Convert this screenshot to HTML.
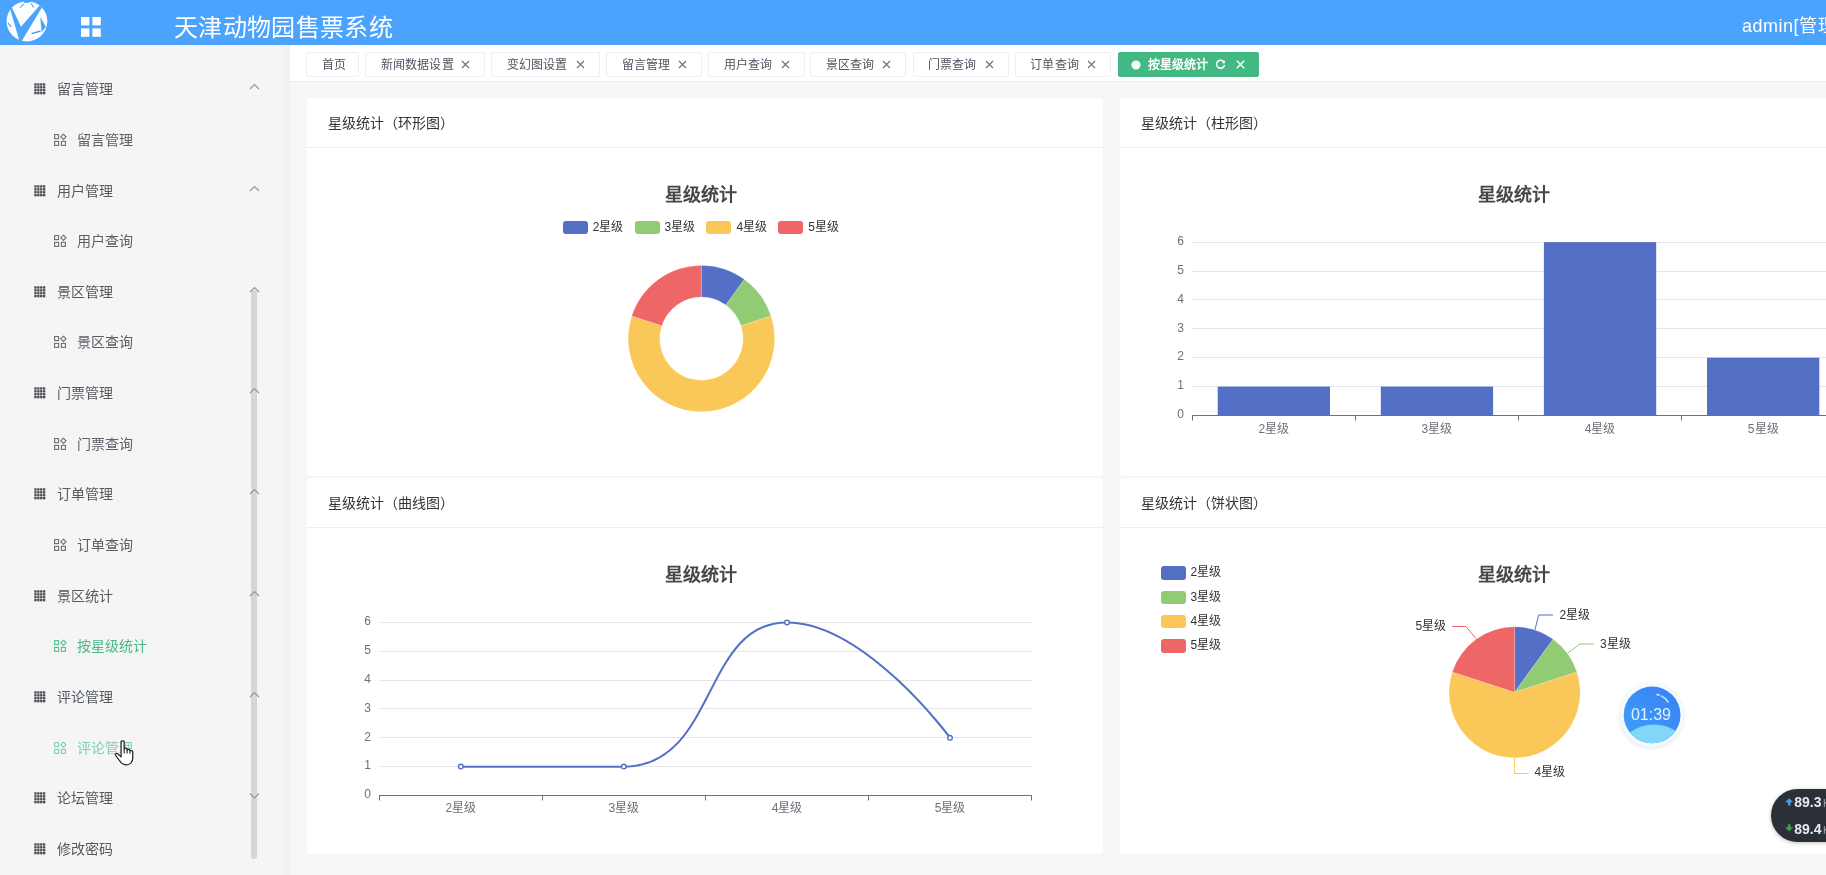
<!DOCTYPE html>
<html lang="zh-CN">
<head>
<meta charset="utf-8">
<title>天津动物园售票系统</title>
<style>
*{box-sizing:border-box;margin:0;padding:0}
html,body{width:1826px;height:875px;overflow:hidden;background:#f7f7f7;}
body{position:relative;font-family:"Liberation Sans",sans-serif;color:#303133;opacity:.999}
.abs{position:absolute}
#hdr{position:absolute;left:0;top:0;width:1826px;height:45px;background:#4ba3fd;}
#hdr .title{position:absolute;left:174px;top:10.5px;height:34px;line-height:34px;font-size:24px;color:#fff;white-space:nowrap;letter-spacing:0.35px}
#hdr .user{position:absolute;left:1742px;top:10px;height:32px;line-height:32px;font-size:18px;color:#fff;white-space:nowrap;letter-spacing:.5px}
#side{position:absolute;left:0;top:45px;width:290px;height:830px;background:#f5f5f5;}
#sideshadow{position:absolute;left:280px;top:45px;width:10px;height:830px;background:linear-gradient(to right,rgba(0,0,0,0),rgba(0,0,0,0.018));}
.mi{position:absolute;left:0;width:290px;height:30px;line-height:30px;font-size:14px;color:#555a61;white-space:nowrap}
.mi .t{position:absolute;left:57px;top:0}
.mi svg.g{position:absolute;left:34px;top:9px}
.si{position:absolute;left:0;width:290px;height:30px;line-height:30px;font-size:14px;color:#5b6067;white-space:nowrap}
.si .t{position:absolute;left:76.7px;top:0}
.si svg.g{position:absolute;left:54px;top:9px}
.chev{position:absolute;left:249px;width:11px;height:7px}
#thumb{position:absolute;left:251px;top:290px;width:6px;height:569px;border-radius:3px;background:#d2d2d2;opacity:.92}
#tabs{position:absolute;left:290px;top:45px;width:1536px;height:37px;background:#fff;border-bottom:1px solid #ededed;}
.tab{position:absolute;top:51.5px;height:25px;border:1px solid #efeff1;border-radius:2px;background:#fff;font-size:12px;line-height:24px;color:#4f5561;white-space:nowrap;letter-spacing:.15px}
.tab .t{position:absolute;left:14.5px;top:0}
.tab svg{position:absolute;top:7.5px}
.tab.on{background:#42b983;border-color:#42b983;color:#fff;font-weight:bold}
.card{position:absolute;background:#fff;border-radius:3px;box-shadow:0 0 2px rgba(0,0,0,0.045)}
.card .h{position:absolute;left:0;top:0;right:0;height:50.8px;border-bottom:1px solid #eeeeee;}
.card .h span{position:absolute;left:21.2px;top:10.8px;height:30px;line-height:30px;font-size:14px;color:#333;white-space:nowrap}
.ct{position:absolute;width:120px;height:26px;line-height:26px;text-align:center;font-size:18px;font-weight:bold;color:#464646;white-space:nowrap}
.lg{position:absolute;height:14px;}
.lg i{position:absolute;left:0;top:0;width:25px;height:13.4px;border-radius:3px}
.lg span{position:absolute;left:30px;top:-2.9px;height:18px;line-height:18px;font-size:12px;color:#333;white-space:nowrap}
.ax{position:absolute;font-size:12px;color:#6e7079;height:16px;line-height:16px;white-space:nowrap}
.pl{position:absolute;font-size:12px;color:#333;height:16px;line-height:16px;white-space:nowrap}
svg{display:block;overflow:visible}
#charts{position:absolute;left:0;top:0;width:1826px;height:875px;pointer-events:none}
</style>
</head>
<body>

<div id="hdr">
<svg class="abs" style="left:0;top:0" width="56" height="46" viewBox="0 0 56 46">
<ellipse cx="26.95" cy="21.3" rx="20.4" ry="20.1" fill="#fbfeff"/>
<path d="M10.2 9.3 L11.9 7.6 L21 26.8 L39.6 5.6 L41.9 7.6 L21.4 41.6 L19.6 41.6 Z" fill="#4ba3fd"/>
<path d="M20.2 7.7 L23.7 3.9 M31 3.2 L33.6 7.4" stroke="#6f9fe0" stroke-width="1.1" fill="none"/>
<path d="M23.8 0.5 L31 0.5 L30.2 2.6 L24.4 2.9 Z" fill="#4ba3fd"/>
<path d="M40.3 17.2 L45.9 26.8 L41.6 32.2 Z" fill="#4ba3fd"/>
<path d="M31.5 33.7 L40.5 31.1" stroke="#4c8fe0" stroke-width="1.3" fill="none"/>
<path d="M8.1 23.1 L11.3 26.8" stroke="#5a8fd8" stroke-width="1.1" fill="none"/>
</svg>
<svg class="abs" style="left:81px;top:17px" width="20" height="20" viewBox="0 0 20 20">
<rect x="0" y="0" width="8.4" height="8.4" fill="#fff"/><rect x="11.4" y="0" width="8.4" height="8.4" fill="#fff"/>
<rect x="0" y="11.4" width="8.4" height="8.4" fill="#fff"/><rect x="11.4" y="11.4" width="8.4" height="8.4" fill="#fff"/>
</svg>
<div class="title">天津动物园售票系统</div>
<div class="user">admin[管理员]</div>
</div>
<div id="side"></div><div id="sideshadow"></div>
<div id="thumb"></div>
<div class="mi" style="top:74.2px"><svg class="g" width="12" height="12" viewBox="0 0 12 12"><g fill="#45494f"><rect x="0.30" y="0.30" width="2.3" height="2.3"/><rect x="3.20" y="0.30" width="2.3" height="2.3"/><rect x="6.10" y="0.30" width="2.3" height="2.3"/><rect x="9.00" y="0.30" width="2.3" height="2.3"/><rect x="0.30" y="3.20" width="2.3" height="2.3"/><rect x="3.20" y="3.20" width="2.3" height="2.3"/><rect x="6.10" y="3.20" width="2.3" height="2.3"/><rect x="9.00" y="3.20" width="2.3" height="2.3"/><rect x="0.30" y="6.10" width="2.3" height="2.3"/><rect x="3.20" y="6.10" width="2.3" height="2.3"/><rect x="6.10" y="6.10" width="2.3" height="2.3"/><rect x="9.00" y="6.10" width="2.3" height="2.3"/><rect x="0.30" y="9.00" width="2.3" height="2.3"/><rect x="3.20" y="9.00" width="2.3" height="2.3"/><rect x="6.10" y="9.00" width="2.3" height="2.3"/><rect x="9.00" y="9.00" width="2.3" height="2.3"/></g></svg><span class="t">留言管理</span></div>
<svg class="chev" style="top:83.2px" viewBox="0 0 11 7"><path d="M1 6 L5.5 1.5 L10 6" fill="none" stroke="#92959b" stroke-width="1.1"/></svg>
<div class="si" style="top:124.8px;color:#5b6067"><svg class="g" width="12" height="12" viewBox="0 0 12 12" fill="none" stroke="#6a6e75" stroke-width="1.1">
<rect x="0.6" y="0.6" width="4" height="4"/><rect x="0.6" y="7.4" width="4" height="4"/><rect x="7.4" y="7.4" width="4" height="4"/>
<path d="M9.4 0.2 L12 2.8 L9.4 5.4 L6.8 2.8 Z"/></svg><span class="t">留言管理</span></div>
<div class="mi" style="top:175.5px"><svg class="g" width="12" height="12" viewBox="0 0 12 12"><g fill="#45494f"><rect x="0.30" y="0.30" width="2.3" height="2.3"/><rect x="3.20" y="0.30" width="2.3" height="2.3"/><rect x="6.10" y="0.30" width="2.3" height="2.3"/><rect x="9.00" y="0.30" width="2.3" height="2.3"/><rect x="0.30" y="3.20" width="2.3" height="2.3"/><rect x="3.20" y="3.20" width="2.3" height="2.3"/><rect x="6.10" y="3.20" width="2.3" height="2.3"/><rect x="9.00" y="3.20" width="2.3" height="2.3"/><rect x="0.30" y="6.10" width="2.3" height="2.3"/><rect x="3.20" y="6.10" width="2.3" height="2.3"/><rect x="6.10" y="6.10" width="2.3" height="2.3"/><rect x="9.00" y="6.10" width="2.3" height="2.3"/><rect x="0.30" y="9.00" width="2.3" height="2.3"/><rect x="3.20" y="9.00" width="2.3" height="2.3"/><rect x="6.10" y="9.00" width="2.3" height="2.3"/><rect x="9.00" y="9.00" width="2.3" height="2.3"/></g></svg><span class="t">用户管理</span></div>
<svg class="chev" style="top:184.5px" viewBox="0 0 11 7"><path d="M1 6 L5.5 1.5 L10 6" fill="none" stroke="#92959b" stroke-width="1.1"/></svg>
<div class="si" style="top:226.1px;color:#5b6067"><svg class="g" width="12" height="12" viewBox="0 0 12 12" fill="none" stroke="#6a6e75" stroke-width="1.1">
<rect x="0.6" y="0.6" width="4" height="4"/><rect x="0.6" y="7.4" width="4" height="4"/><rect x="7.4" y="7.4" width="4" height="4"/>
<path d="M9.4 0.2 L12 2.8 L9.4 5.4 L6.8 2.8 Z"/></svg><span class="t">用户查询</span></div>
<div class="mi" style="top:276.8px"><svg class="g" width="12" height="12" viewBox="0 0 12 12"><g fill="#45494f"><rect x="0.30" y="0.30" width="2.3" height="2.3"/><rect x="3.20" y="0.30" width="2.3" height="2.3"/><rect x="6.10" y="0.30" width="2.3" height="2.3"/><rect x="9.00" y="0.30" width="2.3" height="2.3"/><rect x="0.30" y="3.20" width="2.3" height="2.3"/><rect x="3.20" y="3.20" width="2.3" height="2.3"/><rect x="6.10" y="3.20" width="2.3" height="2.3"/><rect x="9.00" y="3.20" width="2.3" height="2.3"/><rect x="0.30" y="6.10" width="2.3" height="2.3"/><rect x="3.20" y="6.10" width="2.3" height="2.3"/><rect x="6.10" y="6.10" width="2.3" height="2.3"/><rect x="9.00" y="6.10" width="2.3" height="2.3"/><rect x="0.30" y="9.00" width="2.3" height="2.3"/><rect x="3.20" y="9.00" width="2.3" height="2.3"/><rect x="6.10" y="9.00" width="2.3" height="2.3"/><rect x="9.00" y="9.00" width="2.3" height="2.3"/></g></svg><span class="t">景区管理</span></div>
<svg class="chev" style="top:285.8px" viewBox="0 0 11 7"><path d="M1 6 L5.5 1.5 L10 6" fill="none" stroke="#92959b" stroke-width="1.1"/></svg>
<div class="si" style="top:327.4px;color:#5b6067"><svg class="g" width="12" height="12" viewBox="0 0 12 12" fill="none" stroke="#6a6e75" stroke-width="1.1">
<rect x="0.6" y="0.6" width="4" height="4"/><rect x="0.6" y="7.4" width="4" height="4"/><rect x="7.4" y="7.4" width="4" height="4"/>
<path d="M9.4 0.2 L12 2.8 L9.4 5.4 L6.8 2.8 Z"/></svg><span class="t">景区查询</span></div>
<div class="mi" style="top:378.1px"><svg class="g" width="12" height="12" viewBox="0 0 12 12"><g fill="#45494f"><rect x="0.30" y="0.30" width="2.3" height="2.3"/><rect x="3.20" y="0.30" width="2.3" height="2.3"/><rect x="6.10" y="0.30" width="2.3" height="2.3"/><rect x="9.00" y="0.30" width="2.3" height="2.3"/><rect x="0.30" y="3.20" width="2.3" height="2.3"/><rect x="3.20" y="3.20" width="2.3" height="2.3"/><rect x="6.10" y="3.20" width="2.3" height="2.3"/><rect x="9.00" y="3.20" width="2.3" height="2.3"/><rect x="0.30" y="6.10" width="2.3" height="2.3"/><rect x="3.20" y="6.10" width="2.3" height="2.3"/><rect x="6.10" y="6.10" width="2.3" height="2.3"/><rect x="9.00" y="6.10" width="2.3" height="2.3"/><rect x="0.30" y="9.00" width="2.3" height="2.3"/><rect x="3.20" y="9.00" width="2.3" height="2.3"/><rect x="6.10" y="9.00" width="2.3" height="2.3"/><rect x="9.00" y="9.00" width="2.3" height="2.3"/></g></svg><span class="t">门票管理</span></div>
<svg class="chev" style="top:387.1px" viewBox="0 0 11 7"><path d="M1 6 L5.5 1.5 L10 6" fill="none" stroke="#92959b" stroke-width="1.1"/></svg>
<div class="si" style="top:428.8px;color:#5b6067"><svg class="g" width="12" height="12" viewBox="0 0 12 12" fill="none" stroke="#6a6e75" stroke-width="1.1">
<rect x="0.6" y="0.6" width="4" height="4"/><rect x="0.6" y="7.4" width="4" height="4"/><rect x="7.4" y="7.4" width="4" height="4"/>
<path d="M9.4 0.2 L12 2.8 L9.4 5.4 L6.8 2.8 Z"/></svg><span class="t">门票查询</span></div>
<div class="mi" style="top:479.4px"><svg class="g" width="12" height="12" viewBox="0 0 12 12"><g fill="#45494f"><rect x="0.30" y="0.30" width="2.3" height="2.3"/><rect x="3.20" y="0.30" width="2.3" height="2.3"/><rect x="6.10" y="0.30" width="2.3" height="2.3"/><rect x="9.00" y="0.30" width="2.3" height="2.3"/><rect x="0.30" y="3.20" width="2.3" height="2.3"/><rect x="3.20" y="3.20" width="2.3" height="2.3"/><rect x="6.10" y="3.20" width="2.3" height="2.3"/><rect x="9.00" y="3.20" width="2.3" height="2.3"/><rect x="0.30" y="6.10" width="2.3" height="2.3"/><rect x="3.20" y="6.10" width="2.3" height="2.3"/><rect x="6.10" y="6.10" width="2.3" height="2.3"/><rect x="9.00" y="6.10" width="2.3" height="2.3"/><rect x="0.30" y="9.00" width="2.3" height="2.3"/><rect x="3.20" y="9.00" width="2.3" height="2.3"/><rect x="6.10" y="9.00" width="2.3" height="2.3"/><rect x="9.00" y="9.00" width="2.3" height="2.3"/></g></svg><span class="t">订单管理</span></div>
<svg class="chev" style="top:488.4px" viewBox="0 0 11 7"><path d="M1 6 L5.5 1.5 L10 6" fill="none" stroke="#92959b" stroke-width="1.1"/></svg>
<div class="si" style="top:530.0px;color:#5b6067"><svg class="g" width="12" height="12" viewBox="0 0 12 12" fill="none" stroke="#6a6e75" stroke-width="1.1">
<rect x="0.6" y="0.6" width="4" height="4"/><rect x="0.6" y="7.4" width="4" height="4"/><rect x="7.4" y="7.4" width="4" height="4"/>
<path d="M9.4 0.2 L12 2.8 L9.4 5.4 L6.8 2.8 Z"/></svg><span class="t">订单查询</span></div>
<div class="mi" style="top:580.7px"><svg class="g" width="12" height="12" viewBox="0 0 12 12"><g fill="#45494f"><rect x="0.30" y="0.30" width="2.3" height="2.3"/><rect x="3.20" y="0.30" width="2.3" height="2.3"/><rect x="6.10" y="0.30" width="2.3" height="2.3"/><rect x="9.00" y="0.30" width="2.3" height="2.3"/><rect x="0.30" y="3.20" width="2.3" height="2.3"/><rect x="3.20" y="3.20" width="2.3" height="2.3"/><rect x="6.10" y="3.20" width="2.3" height="2.3"/><rect x="9.00" y="3.20" width="2.3" height="2.3"/><rect x="0.30" y="6.10" width="2.3" height="2.3"/><rect x="3.20" y="6.10" width="2.3" height="2.3"/><rect x="6.10" y="6.10" width="2.3" height="2.3"/><rect x="9.00" y="6.10" width="2.3" height="2.3"/><rect x="0.30" y="9.00" width="2.3" height="2.3"/><rect x="3.20" y="9.00" width="2.3" height="2.3"/><rect x="6.10" y="9.00" width="2.3" height="2.3"/><rect x="9.00" y="9.00" width="2.3" height="2.3"/></g></svg><span class="t">景区统计</span></div>
<svg class="chev" style="top:589.7px" viewBox="0 0 11 7"><path d="M1 6 L5.5 1.5 L10 6" fill="none" stroke="#92959b" stroke-width="1.1"/></svg>
<div class="si" style="top:631.4px;color:#47ba86"><svg class="g" width="12" height="12" viewBox="0 0 12 12" fill="none" stroke="#55be90" stroke-width="1.1">
<rect x="0.6" y="0.6" width="4" height="4"/><rect x="0.6" y="7.4" width="4" height="4"/><rect x="7.4" y="7.4" width="4" height="4"/>
<path d="M9.4 0.2 L12 2.8 L9.4 5.4 L6.8 2.8 Z"/></svg><span class="t">按星级统计</span></div>
<div class="mi" style="top:682.0px"><svg class="g" width="12" height="12" viewBox="0 0 12 12"><g fill="#45494f"><rect x="0.30" y="0.30" width="2.3" height="2.3"/><rect x="3.20" y="0.30" width="2.3" height="2.3"/><rect x="6.10" y="0.30" width="2.3" height="2.3"/><rect x="9.00" y="0.30" width="2.3" height="2.3"/><rect x="0.30" y="3.20" width="2.3" height="2.3"/><rect x="3.20" y="3.20" width="2.3" height="2.3"/><rect x="6.10" y="3.20" width="2.3" height="2.3"/><rect x="9.00" y="3.20" width="2.3" height="2.3"/><rect x="0.30" y="6.10" width="2.3" height="2.3"/><rect x="3.20" y="6.10" width="2.3" height="2.3"/><rect x="6.10" y="6.10" width="2.3" height="2.3"/><rect x="9.00" y="6.10" width="2.3" height="2.3"/><rect x="0.30" y="9.00" width="2.3" height="2.3"/><rect x="3.20" y="9.00" width="2.3" height="2.3"/><rect x="6.10" y="9.00" width="2.3" height="2.3"/><rect x="9.00" y="9.00" width="2.3" height="2.3"/></g></svg><span class="t">评论管理</span></div>
<svg class="chev" style="top:691.0px" viewBox="0 0 11 7"><path d="M1 6 L5.5 1.5 L10 6" fill="none" stroke="#92959b" stroke-width="1.1"/></svg>
<div class="si" style="top:732.6px;color:#7fd0ad"><svg class="g" width="12" height="12" viewBox="0 0 12 12" fill="none" stroke="#7fd0ad" stroke-width="1.1">
<rect x="0.6" y="0.6" width="4" height="4"/><rect x="0.6" y="7.4" width="4" height="4"/><rect x="7.4" y="7.4" width="4" height="4"/>
<path d="M9.4 0.2 L12 2.8 L9.4 5.4 L6.8 2.8 Z"/></svg><span class="t">评论管理</span></div>
<div class="mi" style="top:783.3px"><svg class="g" width="12" height="12" viewBox="0 0 12 12"><g fill="#45494f"><rect x="0.30" y="0.30" width="2.3" height="2.3"/><rect x="3.20" y="0.30" width="2.3" height="2.3"/><rect x="6.10" y="0.30" width="2.3" height="2.3"/><rect x="9.00" y="0.30" width="2.3" height="2.3"/><rect x="0.30" y="3.20" width="2.3" height="2.3"/><rect x="3.20" y="3.20" width="2.3" height="2.3"/><rect x="6.10" y="3.20" width="2.3" height="2.3"/><rect x="9.00" y="3.20" width="2.3" height="2.3"/><rect x="0.30" y="6.10" width="2.3" height="2.3"/><rect x="3.20" y="6.10" width="2.3" height="2.3"/><rect x="6.10" y="6.10" width="2.3" height="2.3"/><rect x="9.00" y="6.10" width="2.3" height="2.3"/><rect x="0.30" y="9.00" width="2.3" height="2.3"/><rect x="3.20" y="9.00" width="2.3" height="2.3"/><rect x="6.10" y="9.00" width="2.3" height="2.3"/><rect x="9.00" y="9.00" width="2.3" height="2.3"/></g></svg><span class="t">论坛管理</span></div>
<svg class="chev" style="top:792.3px" viewBox="0 0 11 7"><path d="M1 1.5 L5.5 6 L10 1.5" fill="none" stroke="#92959b" stroke-width="1.1"/></svg>
<div class="mi" style="top:834.0px"><svg class="g" width="12" height="12" viewBox="0 0 12 12"><g fill="#45494f"><rect x="0.30" y="0.30" width="2.3" height="2.3"/><rect x="3.20" y="0.30" width="2.3" height="2.3"/><rect x="6.10" y="0.30" width="2.3" height="2.3"/><rect x="9.00" y="0.30" width="2.3" height="2.3"/><rect x="0.30" y="3.20" width="2.3" height="2.3"/><rect x="3.20" y="3.20" width="2.3" height="2.3"/><rect x="6.10" y="3.20" width="2.3" height="2.3"/><rect x="9.00" y="3.20" width="2.3" height="2.3"/><rect x="0.30" y="6.10" width="2.3" height="2.3"/><rect x="3.20" y="6.10" width="2.3" height="2.3"/><rect x="6.10" y="6.10" width="2.3" height="2.3"/><rect x="9.00" y="6.10" width="2.3" height="2.3"/><rect x="0.30" y="9.00" width="2.3" height="2.3"/><rect x="3.20" y="9.00" width="2.3" height="2.3"/><rect x="6.10" y="9.00" width="2.3" height="2.3"/><rect x="9.00" y="9.00" width="2.3" height="2.3"/></g></svg><span class="t">修改密码</span></div>
<svg class="abs" style="left:113.7px;top:740.3px" width="24" height="27" viewBox="0 0 22 28" preserveAspectRatio="none">
<path d="M6.5 1.8 C6.5 0.6 9.3 0.6 9.3 1.8 L9.3 9.2 C9.3 8.2 12 8.2 12 9.4 L12 10.3 C12 9.3 14.6 9.5 14.6 10.6 L14.6 11.6 C14.8 10.6 17.2 10.8 17.2 12.2 L17.2 18.5 C17.2 23 14.5 25.8 11.5 25.8 C8 25.8 6.5 24 4.8 21 L1.4 15.8 C0.6 14.4 2.6 13.2 3.8 14.6 L6.5 17.6 Z" fill="#fff" stroke="#222" stroke-width="1.15" stroke-linejoin="round"/>
<path d="M9.3 9.2 L9.3 14 M12 10.3 L12 14 M14.6 11.6 L14.6 14.2" stroke="#222" stroke-width="1" fill="none"/>
</svg>
<div id="tabs"></div>
<div class="tab" style="left:306px;width:53.30000000000001px"><span class="t">首页</span></div>
<div class="tab" style="left:365.3px;width:119.69999999999999px"><span class="t">新闻数据设置</span><svg style="left:94.7px" width="9" height="9" viewBox="0 0 9 9"><path d="M1 1 L8 8 M8 1 L1 8" stroke="#6b7280" stroke-width="1.15" fill="none"/></svg></div>
<div class="tab" style="left:491.2px;width:108.80000000000001px"><span class="t">变幻图设置</span><svg style="left:83.8px" width="9" height="9" viewBox="0 0 9 9"><path d="M1 1 L8 8 M8 1 L1 8" stroke="#6b7280" stroke-width="1.15" fill="none"/></svg></div>
<div class="tab" style="left:606.2px;width:96.29999999999995px"><span class="t">留言管理</span><svg style="left:71.3px" width="9" height="9" viewBox="0 0 9 9"><path d="M1 1 L8 8 M8 1 L1 8" stroke="#6b7280" stroke-width="1.15" fill="none"/></svg></div>
<div class="tab" style="left:708px;width:96.5px"><span class="t">用户查询</span><svg style="left:71.5px" width="9" height="9" viewBox="0 0 9 9"><path d="M1 1 L8 8 M8 1 L1 8" stroke="#6b7280" stroke-width="1.15" fill="none"/></svg></div>
<div class="tab" style="left:810.3px;width:96.20000000000005px"><span class="t">景区查询</span><svg style="left:71.2px" width="9" height="9" viewBox="0 0 9 9"><path d="M1 1 L8 8 M8 1 L1 8" stroke="#6b7280" stroke-width="1.15" fill="none"/></svg></div>
<div class="tab" style="left:912.5px;width:96.5px"><span class="t">门票查询</span><svg style="left:71.5px" width="9" height="9" viewBox="0 0 9 9"><path d="M1 1 L8 8 M8 1 L1 8" stroke="#6b7280" stroke-width="1.15" fill="none"/></svg></div>
<div class="tab" style="left:1014.8px;width:96.70000000000005px"><span class="t">订单查询</span><svg style="left:71.7px" width="9" height="9" viewBox="0 0 9 9"><path d="M1 1 L8 8 M8 1 L1 8" stroke="#6b7280" stroke-width="1.15" fill="none"/></svg></div>
<div class="tab on" style="left:1118px;width:141px">
<svg style="left:12px;top:7px" width="10" height="10" viewBox="0 0 10 10"><circle cx="5" cy="5" r="4.6" fill="#fff" opacity=".95"/></svg>
<span class="t" style="left:28.5px">按星级统计</span>
<svg style="left:96px;top:6px" width="11" height="11" viewBox="0 0 11 11"><path d="M9.2 3.6 A4 4 0 1 0 9.5 5.8" fill="none" stroke="#fff" stroke-width="1.6"/><path d="M9.9 1.2 L9.9 4.3 L6.8 4.3 Z" fill="#fff"/></svg>
<svg style="left:117px;top:7px" width="9" height="9" viewBox="0 0 9 9"><path d="M0.8 0.8 L8.2 8.2 M8.2 0.8 L0.8 8.2" stroke="#fff" stroke-width="1.4" fill="none"/></svg>
</div>
<div class="card" style="left:306.6px;top:97.6px;width:796.3px;height:378.2px"><div class="h"><span>星级统计（环形图）</span></div></div>
<div class="card" style="left:1119.7px;top:97.6px;width:797px;height:378.2px"><div class="h"><span>星级统计（柱形图）</span></div></div>
<div class="card" style="left:306.6px;top:477.5px;width:796.3px;height:376.8px"><div class="h"><span>星级统计（曲线图）</span></div></div>
<div class="card" style="left:1119.7px;top:477.5px;width:797px;height:376.8px"><div class="h"><span>星级统计（饼状图）</span></div></div>
<div class="ct" style="left:641px;top:181.7px">星级统计</div>
<div class="ct" style="left:1454px;top:181.7px">星级统计</div>
<div class="ct" style="left:641px;top:561.7px">星级统计</div>
<div class="ct" style="left:1454px;top:561.7px">星级统计</div>
<div class="lg" style="left:562.8px;top:220.5px"><i style="background:#5470c6"></i><span>2星级</span></div>
<div class="lg" style="left:634.6px;top:220.5px"><i style="background:#91cc75"></i><span>3星级</span></div>
<div class="lg" style="left:706.4px;top:220.5px"><i style="background:#fac858"></i><span>4星级</span></div>
<div class="lg" style="left:778.2px;top:220.5px"><i style="background:#ee6666"></i><span>5星级</span></div>
<div class="lg" style="left:1160.5px;top:566.3px"><i style="background:#5470c6"></i><span>2星级</span></div>
<div class="lg" style="left:1160.5px;top:590.6px"><i style="background:#91cc75"></i><span>3星级</span></div>
<div class="lg" style="left:1160.5px;top:615.0px"><i style="background:#fac858"></i><span>4星级</span></div>
<div class="lg" style="left:1160.5px;top:639.3px"><i style="background:#ee6666"></i><span>5星级</span></div>
<svg id="charts" width="1826" height="875" viewBox="0 0 1826 875">
<path d="M701.40 265.40 A73.2 73.2 0 0 1 744.43 279.38 L725.85 304.94 A41.6 41.6 0 0 0 701.40 297.00 Z" fill="#5470c6" stroke="#fff" stroke-opacity=".28" stroke-width=".6"/>
<path d="M744.43 279.38 A73.2 73.2 0 0 1 771.02 315.98 L740.96 325.74 A41.6 41.6 0 0 0 725.85 304.94 Z" fill="#91cc75" stroke="#fff" stroke-opacity=".28" stroke-width=".6"/>
<path d="M771.02 315.98 A73.2 73.2 0 1 1 631.78 315.98 L661.84 325.74 A41.6 41.6 0 1 0 740.96 325.74 Z" fill="#fac858" stroke="#fff" stroke-opacity=".28" stroke-width=".6"/>
<path d="M631.78 315.98 A73.2 73.2 0 0 1 701.40 265.40 L701.40 297.00 A41.6 41.6 0 0 0 661.84 325.74 Z" fill="#ee6666" stroke="#fff" stroke-opacity=".28" stroke-width=".6"/>
<path d="M1514.6 692.3 L1514.60 626.80 A65.5 65.5 0 0 1 1553.10 639.31 Z" fill="#5470c6" stroke="#fff" stroke-opacity=".28" stroke-width=".6"/>
<path d="M1514.6 692.3 L1553.10 639.31 A65.5 65.5 0 0 1 1576.89 672.06 Z" fill="#91cc75" stroke="#fff" stroke-opacity=".28" stroke-width=".6"/>
<path d="M1514.6 692.3 L1576.89 672.06 A65.5 65.5 0 1 1 1452.31 672.06 Z" fill="#fac858" stroke="#fff" stroke-opacity=".28" stroke-width=".6"/>
<path d="M1514.6 692.3 L1452.31 672.06 A65.5 65.5 0 0 1 1514.60 626.80 Z" fill="#ee6666" stroke="#fff" stroke-opacity=".28" stroke-width=".6"/>
<path d="M1192.3 386.5 H1826" stroke="#e4e5ea" stroke-width="1"/>
<path d="M1192.3 357.5 H1826" stroke="#e4e5ea" stroke-width="1"/>
<path d="M1192.3 328.5 H1826" stroke="#e4e5ea" stroke-width="1"/>
<path d="M1192.3 299.5 H1826" stroke="#e4e5ea" stroke-width="1"/>
<path d="M1192.3 271.5 H1826" stroke="#e4e5ea" stroke-width="1"/>
<path d="M1192.3 242.5 H1826" stroke="#e4e5ea" stroke-width="1"/>
<path d="M1192.3 415.5 H1826" stroke="#6e7079" stroke-width="1"/>
<path d="M1192.5 415.5 v5" stroke="#6e7079" stroke-width="1"/>
<path d="M1355.5 415.5 v5" stroke="#6e7079" stroke-width="1"/>
<path d="M1518.5 415.5 v5" stroke="#6e7079" stroke-width="1"/>
<path d="M1681.5 415.5 v5" stroke="#6e7079" stroke-width="1"/>
<rect x="1217.7" y="386.6" width="112.3" height="28.9" fill="#5470c6"/>
<rect x="1380.8" y="386.6" width="112.3" height="28.9" fill="#5470c6"/>
<rect x="1543.9" y="242.1" width="112.3" height="173.4" fill="#5470c6"/>
<rect x="1707.0" y="357.7" width="112.3" height="57.8" fill="#5470c6"/>
<path d="M379.2 766.5 H1031.6" stroke="#e4e5ea" stroke-width="1"/>
<path d="M379.2 737.5 H1031.6" stroke="#e4e5ea" stroke-width="1"/>
<path d="M379.2 708.5 H1031.6" stroke="#e4e5ea" stroke-width="1"/>
<path d="M379.2 680.5 H1031.6" stroke="#e4e5ea" stroke-width="1"/>
<path d="M379.2 651.5 H1031.6" stroke="#e4e5ea" stroke-width="1"/>
<path d="M379.2 622.5 H1031.6" stroke="#e4e5ea" stroke-width="1"/>
<path d="M379.2 795.5 H1031.6" stroke="#6e7079" stroke-width="1"/>
<path d="M379.5 795.5 v5" stroke="#6e7079" stroke-width="1"/>
<path d="M542.5 795.5 v5" stroke="#6e7079" stroke-width="1"/>
<path d="M705.5 795.5 v5" stroke="#6e7079" stroke-width="1"/>
<path d="M868.5 795.5 v5" stroke="#6e7079" stroke-width="1"/>
<path d="M1031.5 795.5 v5" stroke="#6e7079" stroke-width="1"/>
<path d="M460.75 766.65 C460.75 766.65 554.00 766.65 623.85 766.65 C717.10 766.65 701.90 622.40 786.95 622.40 C865.00 622.40 950.05 737.80 950.05 737.80" fill="none" stroke="#5470c6" stroke-width="2"/>
<circle cx="460.8" cy="766.6" r="2.3" fill="#fff" stroke="#5470c6" stroke-width="1.4"/>
<circle cx="623.8" cy="766.6" r="2.3" fill="#fff" stroke="#5470c6" stroke-width="1.4"/>
<circle cx="787.0" cy="622.4" r="2.3" fill="#fff" stroke="#5470c6" stroke-width="1.4"/>
<circle cx="950.0" cy="737.8" r="2.3" fill="#fff" stroke="#5470c6" stroke-width="1.4"/>
<path d="M1534.9 630 L1538.7 615 L1553 615" fill="none" stroke="#5470c6" stroke-width="1"/>
<path d="M1567.6 653.2 L1580 644 L1594 644" fill="none" stroke="#91cc75" stroke-width="1"/>
<path d="M1514.6 757.8 L1514.6 773.5 L1528.5 773.5" fill="none" stroke="#fac858" stroke-width="1"/>
<path d="M1475.9 638.5 L1466 626.5 L1452 626.5" fill="none" stroke="#ee6666" stroke-width="1"/>
</svg>
<div class="ax" style="left:1160px;width:24px;text-align:right;top:406.2px">0</div>
<div class="ax" style="left:1160px;width:24px;text-align:right;top:377.3px">1</div>
<div class="ax" style="left:1160px;width:24px;text-align:right;top:348.4px">2</div>
<div class="ax" style="left:1160px;width:24px;text-align:right;top:319.5px">3</div>
<div class="ax" style="left:1160px;width:24px;text-align:right;top:290.6px">4</div>
<div class="ax" style="left:1160px;width:24px;text-align:right;top:261.7px">5</div>
<div class="ax" style="left:1160px;width:24px;text-align:right;top:232.8px">6</div>
<div class="ax" style="left:1243.8px;width:60px;text-align:center;top:420.7px">2星级</div>
<div class="ax" style="left:1406.9px;width:60px;text-align:center;top:420.7px">3星级</div>
<div class="ax" style="left:1570.0px;width:60px;text-align:center;top:420.7px">4星级</div>
<div class="ax" style="left:1733.2px;width:60px;text-align:center;top:420.7px">5星级</div>
<div class="ax" style="left:347px;width:24px;text-align:right;top:786.2px">0</div>
<div class="ax" style="left:347px;width:24px;text-align:right;top:757.4px">1</div>
<div class="ax" style="left:347px;width:24px;text-align:right;top:728.5px">2</div>
<div class="ax" style="left:347px;width:24px;text-align:right;top:699.7px">3</div>
<div class="ax" style="left:347px;width:24px;text-align:right;top:670.8px">4</div>
<div class="ax" style="left:347px;width:24px;text-align:right;top:642.0px">5</div>
<div class="ax" style="left:347px;width:24px;text-align:right;top:613.1px">6</div>
<div class="ax" style="left:430.8px;width:60px;text-align:center;top:800.1px">2星级</div>
<div class="ax" style="left:593.8px;width:60px;text-align:center;top:800.1px">3星级</div>
<div class="ax" style="left:757.0px;width:60px;text-align:center;top:800.1px">4星级</div>
<div class="ax" style="left:920.0px;width:60px;text-align:center;top:800.1px">5星级</div>
<div class="pl" style="left:1559.5px;top:606.5px">2星级</div>
<div class="pl" style="left:1600px;top:636px">3星级</div>
<div class="pl" style="left:1534.5px;top:763.5px">4星级</div>
<div class="pl" style="left:1415.5px;top:617.5px">5星级</div>
<svg class="abs" style="left:1616px;top:678px" width="72" height="74" viewBox="0 0 72 74">
<defs><linearGradient id="tg" x1="0.85" y1="0.1" x2="0.2" y2="0.9"><stop offset="0" stop-color="#3a82f5"/><stop offset="1" stop-color="#3d9ef8"/></linearGradient>
<clipPath id="tc"><circle cx="36.1" cy="36.9" r="28.4"/></clipPath>
<filter id="tb" x="-30%" y="-30%" width="160%" height="160%"><feGaussianBlur stdDeviation="2.2"/></filter></defs>
<circle cx="35.6" cy="38" r="32" fill="#000" opacity="0.10" filter="url(#tb)"/>
<circle cx="35.6" cy="36.8" r="32" fill="#f3fbff"/>
<circle cx="36.1" cy="36.9" r="28.4" fill="url(#tg)"/>
<g clip-path="url(#tc)"><ellipse cx="38" cy="72.5" rx="33" ry="26" fill="#82d6fa"/></g>
<path d="M40.4 16.4 Q48.5 18 52.6 24.6" fill="none" stroke="#d6ebff" stroke-width="1.7" stroke-dasharray="3.4 1.2 30" opacity=".85"/>
</svg>
<div class="abs" style="left:1621px;top:704.3px;width:60px;height:22px;line-height:22px;text-align:center;font-size:16px;color:#e3f2ff;white-space:nowrap">01:39</div>
<div class="abs" style="left:1770.5px;top:789px;width:80px;height:53px;border-radius:26.5px;background:#2b3038;box-shadow:0 1px 4px rgba(0,0,0,.25)"></div>
<svg class="abs" style="left:1784.6px;top:798.2px" width="8.4" height="7.6" viewBox="0 0 10 10" preserveAspectRatio="none"><path d="M5 0.3 L9.8 5.6 L6.5 5.6 L6.5 9.8 L3.5 9.8 L3.5 5.6 L0.2 5.6 Z" fill="#3fa6dc"/></svg>
<svg class="abs" style="left:1784.6px;top:824.4px" width="8.4" height="7.6" viewBox="0 0 10 10" preserveAspectRatio="none"><path d="M5 9.7 L9.8 4.4 L6.5 4.4 L6.5 0.2 L3.5 0.2 L3.5 4.4 L0.2 4.4 Z" fill="#3da544"/></svg>
<div class="abs" style="left:1794.3px;top:791.6px;height:20px;line-height:20px;font-size:14px;font-weight:bold;color:#e8eaee;white-space:nowrap">89.3<span style="font-size:10px;font-weight:normal;color:#aab;margin-left:1.5px">K</span></div>
<div class="abs" style="left:1794.3px;top:819.1px;height:20px;line-height:20px;font-size:14px;font-weight:bold;color:#e8eaee;white-space:nowrap">89.4<span style="font-size:10px;font-weight:normal;color:#aab;margin-left:1.5px">K</span></div>

</body></html>
